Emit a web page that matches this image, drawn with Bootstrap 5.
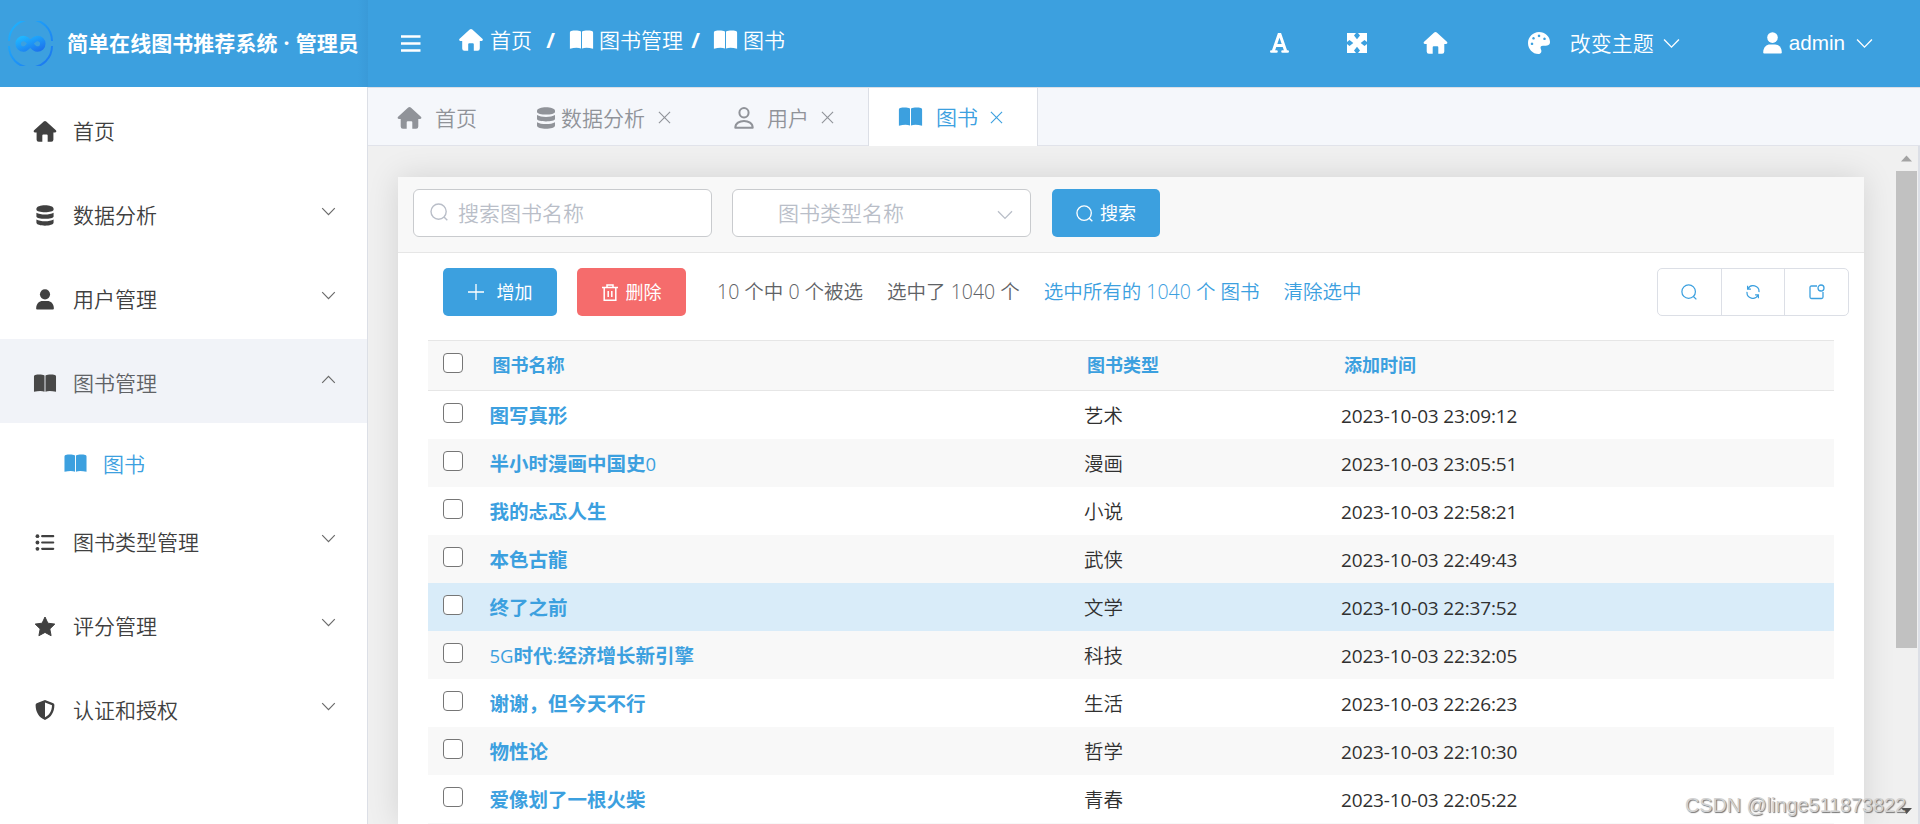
<!DOCTYPE html>
<html lang="zh-CN">
<head>
<meta charset="utf-8">
<title>简单在线图书推荐系统</title>
<link href="https://cdn.jsdelivr.net/npm/bootstrap@5.3.0/dist/css/bootstrap.min.css" rel="stylesheet">
<script src="https://cdn.jsdelivr.net/npm/bootstrap@5.3.0/dist/js/bootstrap.bundle.min.js"></script>
<style>
:root{--main:#3ca0df;--line:#dcdfe6}
html,body{height:100%;overflow:hidden}
body{font-family:"Open Sans","Noto Sans CJK SC",sans-serif;font-size:21px;line-height:30px;color:#404040;font-weight:350;background:#fff}
svg{display:block;flex:none;fill:currentColor}
.ln{fill:none;stroke:currentColor}
a{text-decoration:none;color:inherit}
.side{width:368px;border-right:1px solid var(--line)}
.brand{height:87px;width:368px;margin-right:-1px;background:linear-gradient(90deg,var(--main) 358px,#3a9ad8 368px);color:#fff;padding-left:8px;font-weight:700;white-space:nowrap}
.brand span{margin:-2px 0 0 14px;letter-spacing:.05px;word-spacing:.6px}
.item{height:84px;padding:4px 31px 0 32px}
.item svg:first-child{width:26px;margin-right:15px}
.item .chev{margin-top:-7px;color:#6a6a6a}
.item.open{background:#f1f3f8;color:#606266}
.item.open svg:first-child{color:#484848}
.subitem{height:75px;color:var(--main);padding:6px 0 0 63px}
.topbar{height:87px;background:var(--main);color:#fff;padding:0 47px 0 33px}
.crumbs{margin:-7px 0 0 38px}
.crumbs .sep{font-weight:700;width:37px;text-align:center}
.account{margin-top:-1px}
.tabs{height:59px;background:#f5f7fb;border-top:1px solid var(--line);border-bottom:1px solid #e1e3ea;color:#909399;padding-left:28px}
.tabs a{height:58px;padding-top:1px}
.tabs .act{width:170px;height:59px;margin-left:34px;padding:0 0 1px 29px;background:#fff;color:var(--main);border-left:1px solid var(--line);border-right:1px solid var(--line)}
.page{background:#f0f0f0;min-height:0}
.panel{margin:31px 0 0 30px;width:1466px;background:#fff;box-shadow:0 0 30px rgba(0,0,0,.12)}
.filters{height:76px;padding:12px 15px;background:#f8f8f8;border-bottom:1px solid #e6e6e6;font-size:18px}
.field{height:48px;width:299px;border:1px solid #c9cbce;border-radius:6px;background:#fff;color:#b9bec8;font-size:21px;margin-right:20px}
.btn-x{height:48px;border:0;border-radius:5px;color:#fff;font-size:18px;font-weight:400;padding:0;background:var(--main);display:flex;align-items:center;justify-content:center}
.tools{height:87px;padding:15px 15px 0 45px;font-size:19.5px;line-height:48px;color:#606266}
.tools .info{white-space:pre}
.tools .blue{color:var(--main)}
.grp{width:192px;height:48px;border:1px solid var(--line);border-radius:5px;color:var(--main)}
.grp span{flex:1;display:flex;align-items:center;justify-content:center}
.grp span+span{border-left:1px solid var(--line)}
.rowx{display:grid;grid-template-columns:61.5px 594.5px 257px 1fr;margin:0 30px;height:48px;padding-top:1px;font-size:19.5px;line-height:48px;color:#303030}
.rowx:nth-child(even){background:#f8f8f8}
.rowx.hov{background:#d9ecf9}
.rowx.head{height:51px;background:#f8f8f8;border-top:1px solid #e6e6e6;border-bottom:1px solid #e6e6e6;font-size:18px;font-weight:700;color:var(--main);padding-top:0}
.rowx.head b{padding-left:3px}
.rowx b{color:var(--main);font-weight:700}
.rowx b i{font-style:normal;font-weight:500;font-size:18.5px}
.rowx time{font-size:19px;font-weight:400;letter-spacing:-.16px}
.cb{width:19.5px;height:19.5px;border:1.5px solid #767676;border-radius:4px;background:#fff;margin:11px 0 0 15px;display:block}
.head .cb{margin-top:12px}
.bar{width:24px;border-right:2px solid var(--line);padding-top:9px}
.bar .thumb{width:21px;height:477px;background:#c1c1c1;margin-top:9px}
.wm{right:14px;bottom:4px;font:400 19.8px/30px "Liberation Sans",sans-serif;color:#d2d2d2;text-shadow:1px 1px 1px #747474;z-index:4}
</style>
</head>
<body class="d-flex">
<svg width="0" height="0" class="position-absolute">
<symbol id="home" viewBox="0 0 24 22"><path d="M10.7.6 .6 9.8C-.3 10.7.2 12 1.3 12H3.2V19.6Q3.2 21.8 5.4 21.8H9.2V15.2Q9.2 14.2 10.2 14.2H13.8Q14.8 14.2 14.8 15.2V21.8H18.6Q20.8 21.8 20.8 19.6V12H22.7C23.8 12 24.3 10.7 23.4 9.8L13.3.6Q12-.5 10.7.6Z"/></symbol>
<symbol id="db" viewBox="0 0 20 22"><path d="M1 4C1 -.9 19 -.9 19 4V5C19 8.4 1 8.4 1 5Z"/><path d="M1 8.1C5 10.6 15 10.6 19 8.1V12C19 15.2 1 15.2 1 12Z"/><path d="M1 15.2C5 17.7 15 17.7 19 15.2V18.4C19 22.8 1 22.8 1 18.4Z"/></symbol>
<symbol id="user" viewBox="0 0 20 22"><circle cx="10" cy="5.6" r="5.3"/><path d="M.7 20.4C.7 15.2 4.2 12.6 7.4 12.6H12.6C15.8 12.6 19.3 15.2 19.3 20.400Q19.300 21.400 18.300 21.400H1.700Q.7 21.400.7 20.400Z"/></symbol>
<symbol id="userln" viewBox="0 0 20 22"><g class="ln" stroke-width="2"><ellipse cx="10" cy="5.8" rx="4.6" ry="4.700"/><path d="M1.300 20.700C1.300 11.600 18.700 11.600 18.700 20.700Z" stroke-linejoin="round"/></g></symbol>
<symbol id="book" viewBox="0 0 24 20"><path d="M.4 2.5Q.4 1.2 1.6 1C5 .3 9 .3 11.5 1.6V18.6C9 17.6 5 17.6.4 18.8Z"/><path d="M23.6 2.5Q23.6 1.2 22.4 1C19 .3 15 .3 12.5 1.6V18.6C15 17.6 19 17.6 23.6 18.8Z"/></symbol>
<symbol id="list" viewBox="0 0 20 18"><circle cx="2" cy="2.3" r="2"/><circle cx="2" cy="9" r="2"/><circle cx="2" cy="15.7" r="2"/><path class="ln" stroke-width="2.3" stroke-linecap="round" d="M7 2.3H18.7M7 9H18.7M7 15.7H18.7"/></symbol>
<symbol id="star" viewBox="0 0 22 21"><path stroke="currentColor" stroke-linejoin="round" d="M11 1 13.9 7.2 20.8 8.1 15.8 12.9 17.1 19.7 11 16.4 4.9 19.7 6.2 12.9 1.2 8.1 8.1 7.2Z"/></symbol>
<symbol id="shield" viewBox="0 0 20 20"><path fill-rule="evenodd" d="M10 0 18.3 3.2Q19.4 3.7 19.4 5C19.3 12 16.4 17.3 10 20C3.6 17.3.7 12 .6 5Q.6 3.7 1.7 3.2ZM10 2.6V17.2C14.6 15 16.9 11 17 5.3Z"/></symbol>
<symbol id="down" viewBox="0 0 16 10"><path class="ln" stroke-width="1.3" d="M1 1.2 8 8.4 15 1.2"/></symbol>
<symbol id="xx" viewBox="0 0 14 14"><path class="ln" stroke-width="1.2" d="M1 1 13 13M13 1 1 13"/></symbol>
<symbol id="find" viewBox="0 0 18 18"><g class="ln" stroke-width="1.4"><circle cx="8.6" cy="8.6" r="7.6"/><path d="M14 14 17.3 17.3"/></g></symbol>
</svg>

<aside class="side flex-shrink-0">
<div class="brand d-flex align-items-center">
<svg width="45" height="45" viewBox="0 0 45 45"><defs><linearGradient id="lg" x2="1" y2="1"><stop stop-color="#1fb6ff"/><stop offset="1" stop-color="#1c74ee"/></linearGradient></defs><g fill="none" stroke="url(#lg)"><path stroke-width="2" d="M1 20A21.5 21.5 0 0 1 44 20M1 25A21.5 21.5 0 0 0 44 25"/><path stroke-width="5.500" d="M22.500 22.800C19 18 17.500 17.500 15.500 17.500A5.300 5.300 0 1 0 15.500 28.100C21 28.100 23 17.500 29.500 17.500A5.300 5.300 0 1 1 29.500 28.100C27 28.100 25.500 27 22.500 22.800"/></g></svg>
<span>简单在线图书推荐系统 · 管理员</span></div>
<nav>
<a class="item d-flex align-items-center"><svg height="21"><use href="#home"/></svg>首页</a>
<a class="item d-flex align-items-center"><svg height="21"><use href="#db"/></svg>数据分析<svg class="chev ms-auto" width="15" height="9"><use href="#down"/></svg></a>
<a class="item d-flex align-items-center"><svg height="21"><use href="#user"/></svg>用户管理<svg class="chev ms-auto" width="15" height="9"><use href="#down"/></svg></a>
<a class="item open d-flex align-items-center"><svg height="19"><use href="#book"/></svg>图书管理<svg class="chev ms-auto" width="15" height="9" viewBox="0 0 16 10"><path class="ln" stroke-width="1.300" d="M1 8.800 8 1.600 15 8.800"/></svg></a>
<a class="subitem d-flex align-items-center"><svg width="25" height="19" style="margin-right:15px"><use href="#book"/></svg>图书</a>
<a class="item d-flex align-items-center"><svg height="17"><use href="#list"/></svg>图书类型管理<svg class="chev ms-auto" width="15" height="9"><use href="#down"/></svg></a>
<a class="item d-flex align-items-center"><svg height="21"><use href="#star"/></svg>评分管理<svg class="chev ms-auto" width="15" height="9"><use href="#down"/></svg></a>
<a class="item d-flex align-items-center"><svg height="20"><use href="#shield"/></svg>认证和授权<svg class="chev ms-auto" width="15" height="9"><use href="#down"/></svg></a>
</nav>
</aside>

<main class="flex-grow-1 d-flex flex-column" style="min-width:0">
<header class="topbar d-flex align-items-center flex-shrink-0">
<svg width="20" height="17"><path class="ln" stroke-width="2.600" d="M0 1.500H19.500M0 8.500H19.500M0 15.500H19.500"/></svg>
<div class="crumbs d-flex align-items-center">
<svg width="24" height="22" style="margin-right:7px"><use href="#home"/></svg>首页<span class="sep">/</span>
<svg width="25" height="20" style="margin-right:5px"><use href="#book"/></svg>图书管理<span class="sep" style="width:30px;padding-right:5px">/</span>
<svg width="25" height="20" style="margin-right:5px"><use href="#book"/></svg>图书
</div>
<div class="account ms-auto d-flex align-items-center">
<svg width="19" height="20" viewBox="0 0 19 20"><path class="ln" stroke-width="3" d="M3.300 18 9 1.500H10L15.700 18M5.500 12.500H13.500"/><path class="ln" stroke-width="2.600" stroke-linecap="round" d="M1.300 18.500H6.500M12.500 18.500H17.700"/></svg>
<svg width="20" height="20" viewBox="0 0 20 20" style="margin-left:58px"><path d="M0 0H9L7 2.500 10 6.300 13 2.500 11 0H20V9L17.500 7 13.700 10 17.500 13 20 11V20H11L13 17.500 10 13.700 7 17.500 9 20H0V11L2.500 13 6.300 10 2.500 7 0 9Z"/></svg>
<svg width="25" height="22" style="margin-left:56px"><use href="#home"/></svg>
<svg width="22" height="22" viewBox="0 0 22 22" style="margin:0 20px 0 80px"><path fill-rule="evenodd" d="M11 0C17 0 22 4.500 22 10C22 14 18 13.800 15 13.800C12.500 13.800 12 15.500 13 17.500C14 19.500 13 22 10.500 22C4.500 22 0 17 0 11C0 5 5 0 11 0ZM4 10.500a1.300 1.300 0 1 0 .01 0ZM5.500 5a1.300 1.300 0 1 0 .01 0ZM11 2.600a1.300 1.300 0 1 0 .01 0ZM16.500 5.500a1.300 1.300 0 1 0 .01 0Z"/></svg>改变主题
<svg width="17" height="11" viewBox="0 0 16 10" style="margin:0 82px 0 9px"><use href="#down"/></svg>
<svg width="21" height="22"><use href="#user"/></svg>
<span style="font:400 20.700px 'Liberation Sans',sans-serif;margin:0 11px 0 6px">admin</span>
<svg width="17" height="11" viewBox="0 0 16 10"><use href="#down"/></svg>
</div>
</header>
<div class="tabs d-flex flex-shrink-0">
<a class="d-flex align-items-center"><svg width="25" height="22" style="margin:0 13px 0 1px"><use href="#home"/></svg>首页</a>
<a class="d-flex align-items-center" style="margin-left:59px"><svg width="20" height="22" style="margin-right:5px"><use href="#db"/></svg>数据分析<svg width="13" height="13" style="margin-left:13px"><use href="#xx"/></svg></a>
<a class="d-flex align-items-center" style="margin-left:63px"><svg width="20" height="22" style="margin-right:13px"><use href="#userln"/></svg>用户<svg width="13" height="13" style="margin-left:12px"><use href="#xx"/></svg></a>
<a class="act d-flex align-items-center"><svg width="25" height="20" style="margin-right:13px"><use href="#book"/></svg>图书<svg width="13" height="13" style="margin-left:12px"><use href="#xx"/></svg></a>
</div>
<div class="page flex-grow-1 d-flex justify-content-between overflow-hidden">
<section class="panel">
<div class="filters d-flex">
<div class="field d-flex align-items-center" style="padding-left:16px"><svg width="18" height="18" style="margin:-2px 10px 0 0"><use href="#find"/></svg>搜索图书名称</div>
<div class="field d-flex align-items-center" style="padding:0 17px 0 45px;margin-right:21px">图书类型名称<svg class="ms-auto mt-1" width="16" height="10"><use href="#down"/></svg></div>
<button class="btn btn-x" style="width:108px"><svg width="17" height="17" viewBox="0 0 18 18" style="margin-right:7px"><use href="#find"/></svg>搜索</button>
</div>
<div class="tools d-flex">
<button class="btn btn-x" style="width:114px"><svg width="16" height="16" style="margin-right:13px"><path class="ln" stroke-width="1.300" d="M8 0V16M0 8H16"/></svg>增加</button>
<button class="btn btn-x" style="width:109px;margin-left:20px;background:#f56c6c"><svg width="16" height="17" style="margin-right:8px"><path class="ln" stroke-width="1.500" d="M0 3.500H16M5 3V1H11V3M2.200 4V16.200H13.800V4M6.200 7V13M9.800 7V13"/></svg>删除</button>
<span class="info" style="margin-left:31px">10 个中 0 个被选</span>
<span class="info" style="margin-left:24px">选中了 1040 个</span>
<a class="info blue" style="margin-left:24px">选中所有的 1040 个 图书</a>
<a class="info blue" style="margin-left:24px">清除选中</a>
<div class="grp d-flex ms-auto">
<span><svg width="16" height="16" viewBox="0 0 18 18"><use href="#find"/></svg></span>
<span><svg width="14" height="14" viewBox="0 0 15 15"><path class="ln" stroke-width="1.300" d="M2 4.200A6.300 6.300 0 0 1 13.900 7.600M13 10.800A6.300 6.300 0 0 1 1.100 7.400M1.700 .8V4.400H5.300M13.300 14.200V10.600H9.700"/></svg></span>
<span><svg width="16" height="16" viewBox="0 0 16 16"><path class="ln" stroke-width="1.300" d="M8 2H2.500Q1 2 1 3.500V13Q1 14.500 2.500 14.500H12.500Q14 14.500 14 13V8"/><circle class="ln" stroke-width="1.300" cx="12" cy="4" r="3"/></svg></span>
</div>
</div>
<div>
<div class="rowx head"><span class="cb"></span><b>图书名称</b><b>图书类型</b><b>添加时间</b></div>
</div>
<div>
<div class="rowx"><span class="cb"></span><b>图写真形</b><span>艺术</span><time>2023-10-03 23:09:12</time></div>
<div class="rowx"><span class="cb"></span><b>半小时漫画中国史<i>0</i></b><span>漫画</span><time>2023-10-03 23:05:51</time></div>
<div class="rowx"><span class="cb"></span><b>我的忐忑人生</b><span>小说</span><time>2023-10-03 22:58:21</time></div>
<div class="rowx"><span class="cb"></span><b>本色古龍</b><span>武侠</span><time>2023-10-03 22:49:43</time></div>
<div class="rowx hov"><span class="cb"></span><b>终了之前</b><span>文学</span><time>2023-10-03 22:37:52</time></div>
<div class="rowx"><span class="cb"></span><b><i>5G</i>时代<i>:</i>经济增长新引擎</b><span>科技</span><time>2023-10-03 22:32:05</time></div>
<div class="rowx"><span class="cb"></span><b>谢谢，但今天不行</b><span>生活</span><time>2023-10-03 22:26:23</time></div>
<div class="rowx"><span class="cb"></span><b>物性论</b><span>哲学</span><time>2023-10-03 22:10:30</time></div>
<div class="rowx"><span class="cb"></span><b>爱像划了一根火柴</b><span>青春</span><time>2023-10-03 22:05:22</time></div>
<div class="rowx"></div>
</div>
</section>
<div class="bar d-flex flex-column">
<svg width="21" height="7"><path fill="#a3a3a3" d="M5 6.500 10.500 .5 16 6.500Z"/></svg>
<div class="thumb"></div>
<svg width="21" height="7" style="margin-top:160px"><path fill="#505050" d="M5 0H16L10.500 6Z"/></svg>
</div>
</div>
</main>
<div class="wm position-absolute">CSDN @linge511873822</div>
</body>
</html>
